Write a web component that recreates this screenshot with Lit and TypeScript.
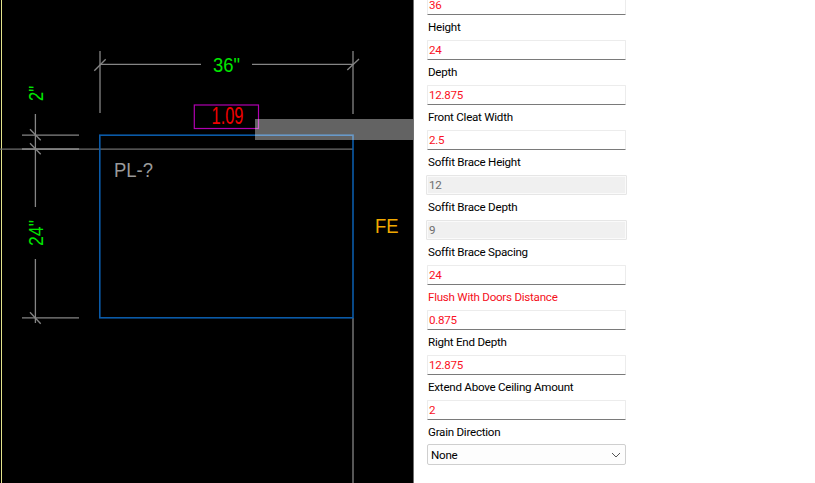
import { LitElement, html, css, svg } from "lit";
import { customElement } from "lit/decorators.js";

interface Field {
	label?: string;
	value: string;
	disabled?: boolean;
	error?: boolean;
}

const FIELDS: Field[] = [
	{ value: "36" },
	{ label: "Height", value: "24" },
	{ label: "Depth", value: "12.875" },
	{ label: "Front Cleat Width", value: "2.5" },
	{ label: "Soffit Brace Height", value: "12", disabled: true },
	{ label: "Soffit Brace Depth", value: "9", disabled: true },
	{ label: "Soffit Brace Spacing", value: "24" },
	{ label: "Flush With Doors Distance", value: "0.875", error: true },
	{ label: "Right End Depth", value: "12.875" },
	{ label: "Extend Above Ceiling Amount", value: "2" },
];

// [x1, y1, x2, y2] of every grey line on the drawing
const LINES: number[][] = [
	[100, 51, 100, 113],
	[353, 51, 353, 114],
	[100, 64.4, 201, 64.4],
	[252, 64.4, 353, 64.4],
	[94.3, 70.7, 105.7, 59.3],
	[347.3, 70, 359, 59],
	[22, 135.2, 79, 135.2],
	[22, 149.2, 79, 149.2],
	[22, 149.2, 79, 149.2],
	[35.4, 114, 35.4, 207],
	[35.4, 259, 35.4, 323],
	[22, 317.8, 79, 317.8],
	[30, 129.3, 40.7, 140.3],
	[30, 143.3, 40.7, 154.3],
	[30, 312.3, 40.7, 323.7],
	[353, 318, 353, 483],
];

@customElement("app-root")
export class AppRoot extends LitElement {
	static styles = css`
		:host {
			display: flex;
			width: 815px;
			height: 483px;
			overflow: hidden;
			background: #fff;
		}

		.drawing {
			flex: none;
			width: 414px;
			height: 483px;
			display: block;
			background: #000;
		}

		.drawing text {
			font-family: "Liberation Sans", Arial, sans-serif;
		}

		.panel {
			flex: none;
			width: 199px;
			margin-left: 13px;
			margin-top: -5px;
			display: flex;
			flex-direction: column;
			font-family: Roboto, "Open Sans", sans-serif;
			font-size: 11.6px;
			letter-spacing: -0.25px;
			color: #000;
		}

		.field {
			height: 45px;
			display: flex;
			flex-direction: column;
		}

		.field.first {
			height: 20px;
		}

		.label {
			height: 25px;
			padding-left: 1px;
			padding-top: 4px;
			box-sizing: border-box;
			line-height: 17px;
			white-space: nowrap;
		}

		.label.error {
			color: #f5101c;
		}

		.input {
			height: 20px;
			box-sizing: border-box;
			padding-left: 1px;
			line-height: 19px;
			background: #fff;
			border: 1px solid #ececec;
			border-bottom: 1px solid #7a7a7a;
			border-radius: 1px;
			color: #fa1226;
		}

		.input.disabled {
			margin: 0 -0.5px 0 -1px;
			background: #f0f0f0;
			border: 1px solid #e6e6e6;
			box-shadow: inset 0 0 0 1px #fafafa;
			padding-left: 2px;
			color: #6d6d6d;
		}

		.select {
			height: 21px;
			box-sizing: border-box;
			padding: 1px 4px 0 3px;
			display: flex;
			align-items: center;
			justify-content: space-between;
			background: #fdfdfd;
			border: 1px solid #cfcfcf;
			border-radius: 2px;
		}
	`;

	renderDrawing() {
		return html`<svg class="drawing" viewBox="0 0 414 483">
			<line x1="1.5" y1="0" x2="1.5" y2="483" stroke="#e4e48c" />
			<line x1="0" y1="149.2" x2="353" y2="149.2" stroke="#6e6e6e" stroke-width="1.3" />
			${LINES.map(
				(l) =>
					svg`<line x1=${l[0]} y1=${l[1]} x2=${l[2]} y2=${l[3]} stroke="#858585" stroke-width="1.3" />`,
			)}
			<rect x="99.8" y="135.2" width="253.2" height="182.6" fill="none" stroke="#0a5aa8" stroke-width="1.6" />
			<rect x="194.3" y="105" width="64.2" height="23.5" fill="none" stroke="#b000b0" stroke-width="1.2" />
			<text x="211.5" y="124" font-size="23.5" fill="#f00000" textLength="32" lengthAdjust="spacingAndGlyphs">1.09</text>
			<rect x="255" y="119" width="159" height="21" fill="#fff" fill-opacity="0.39" />
			<line x1="413.5" y1="0" x2="413.5" y2="483" stroke="#707070" />
			<text x="213" y="72" font-size="20" fill="#00e600" textLength="27" lengthAdjust="spacingAndGlyphs">36"</text>
			<text x="114" y="177.3" font-size="19.5" fill="#9a9a9a" textLength="39" lengthAdjust="spacingAndGlyphs">PL-?</text>
			<text x="375" y="233.3" font-size="19.5" fill="#f0a800" textLength="23.5" lengthAdjust="spacingAndGlyphs">FE</text>
			<text transform="translate(43.3 101) rotate(-90)" font-size="19.5" fill="#00e600" textLength="15" lengthAdjust="spacingAndGlyphs">2"</text>
			<text transform="translate(43.3 246) rotate(-90)" font-size="19.5" fill="#00e600" textLength="26" lengthAdjust="spacingAndGlyphs">24"</text>
		</svg>`;
	}

	render() {
		return html`
			${this.renderDrawing()}
			<div class="panel">
				${FIELDS.map(
					(f) => html`<div class="field ${f.label ? "" : "first"}">
						${f.label ? html`<div class="label ${f.error ? "error" : ""}">${f.label}</div>` : ""}
						<div class="input ${f.disabled ? "disabled" : ""}">${f.value}</div>
					</div>`,
				)}
				<div class="field">
					<div class="label">Grain Direction</div>
					<div class="select">
						<span>None</span>
						<svg width="10" height="6" viewBox="0 0 10 6">
							<path d="M1 1l4 4 4-4" fill="none" stroke="#555" />
						</svg>
					</div>
				</div>
			</div>
		`;
	}
}
